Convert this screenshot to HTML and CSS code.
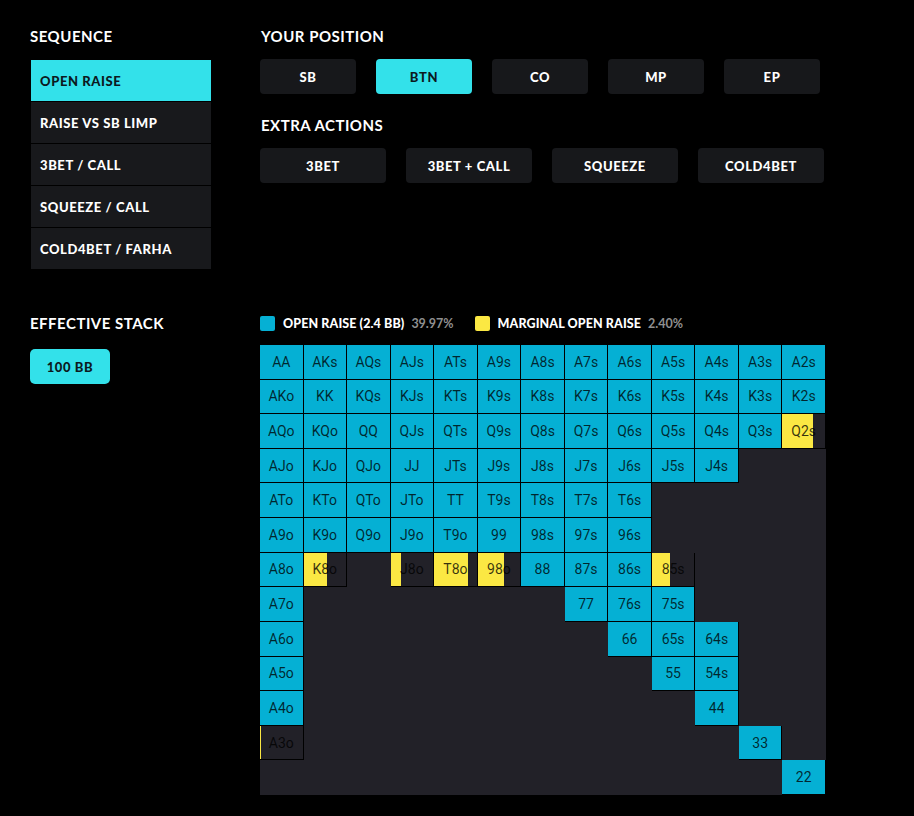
FILE: index.html
```html
<!DOCTYPE html>
<html lang="en">
<head>
<meta charset="utf-8">
<title>Preflop Range</title>
<link rel="stylesheet" href="styles.css">
</head>
<body>
<div class="page">
  <section class="top">
    <div class="col-left">
      <h2 class="heading">SEQUENCE</h2>
      <ul class="seq">
        <li class="seq-item active">OPEN RAISE</li>
        <li class="seq-item">RAISE VS SB LIMP</li>
        <li class="seq-item">3BET / CALL</li>
        <li class="seq-item">SQUEEZE / CALL</li>
        <li class="seq-item">COLD4BET / FARHA</li>
      </ul>
    </div>
    <div class="col-right">
      <h2 class="heading">YOUR POSITION</h2>
      <div class="btn-row pos">
        <button class="btn">SB</button>
        <button class="btn active">BTN</button>
        <button class="btn">CO</button>
        <button class="btn">MP</button>
        <button class="btn">EP</button>
      </div>
      <h2 class="heading second">EXTRA ACTIONS</h2>
      <div class="btn-row extra">
        <button class="btn">3BET</button>
        <button class="btn">3BET + CALL</button>
        <button class="btn">SQUEEZE</button>
        <button class="btn">COLD4BET</button>
      </div>
    </div>
  </section>
  <section class="bottom">
    <div class="col-left">
      <h2 class="heading">EFFECTIVE STACK</h2>
      <button class="btn active stack">100 BB</button>
    </div>
    <div class="col-right">
      <div class="legend">
        <div class="legend-item">
          <span class="swatch raise"></span>
          <span class="legend-label">OPEN RAISE (2.4 BB)</span>
          <span class="legend-pct">39.97%</span>
        </div>
        <div class="legend-item">
          <span class="swatch marginal"></span>
          <span class="legend-label">MARGINAL OPEN RAISE</span>
          <span class="legend-pct">2.40%</span>
        </div>
      </div>
      <div class="range" id="range"></div>
    </div>
  </section>
</div>
<script src="script.js"></script>
</body>
</html>
```
FILE: styles.css
```css
* { box-sizing: border-box; }
html, body { margin: 0; padding: 0; background: #000; }
body { font-family: "Lato", "Liberation Sans", sans-serif; color: #fff; }

.page { padding: 27px 0 0 30px; width: 914px; height: 816px; }

.top, .bottom { display: grid; grid-template-columns: 230px 1fr; }
.bottom { margin-top: 45px; }

.heading {
  margin: 0;
  font-size: 15px;
  line-height: 18px;
  font-weight: 700;
  letter-spacing: 0.5px;
}
.col-left .heading { margin-bottom: 15px; }
.col-right .heading { margin-bottom: 14px; padding-left: 1px; }
.col-right .heading.second { margin-top: 22px; }

.seq { list-style: none; margin: 0 0 0 1px; padding: 0; width: 180px; }
.seq-item {
  height: 42px;
  border-bottom: 1px solid #000;
  background: #18191c;
  display: flex;
  align-items: center;
  padding-left: 9px;
  font-size: 13px;
  font-weight: 900;
  letter-spacing: 0.6px;
}
.seq-item:last-child { border-bottom: 0; height: 41px; }
.seq-item.active { background: #33e1ea; color: #0c1a1e; }

.btn-row { display: flex; gap: 20px; }
.btn {
  height: 35px;
  border: 0;
  border-radius: 4px;
  background: #17181b;
  color: #fff;
  font-family: "Lato", "Liberation Sans", sans-serif;
  font-size: 13px;
  font-weight: 900;
  letter-spacing: 0.6px;
  padding: 0;
  display: flex;
  align-items: center;
  justify-content: center;
}
.pos .btn { width: 96px; }
.extra .btn { width: 126px; }
.btn.active { background: #33e1ea; color: #0c1a1e; }
.btn.stack { width: 80px; margin-top: 17px; border-radius: 5px; }

.legend { display: flex; align-items: center; height: 18px; }
.legend-item { display: flex; align-items: center; margin-right: 21px; }
.swatch { width: 15px; height: 15px; border-radius: 2px; margin-right: 8px; }
.swatch.raise { background: #05b0d4; }
.swatch.marginal { background: #fbe843; }
.legend-label {
  font-weight: 900;
  font-size: 12.5px;
  letter-spacing: 0.1px;
  margin-right: 7px;
}
.legend-pct {
  font-size: 12.5px;
  font-weight: 700;
  color: #8f8f8f;
}

.range {
  margin-top: 13px;
  width: 566px;
  height: 450px;
  background: #222128;
  display: grid;
  grid-template-columns: repeat(13, 1fr);
  grid-template-rows: repeat(13, 1fr);
}
.cell {
  display: flex;
  align-items: center;
  justify-content: center;
  font-family: "Roboto", "Liberation Sans", sans-serif;
  font-size: 14px;
  color: rgba(0, 0, 0, 0.78);
}
.cell.raise { background: #05b0d4; border-right: 1px solid #000; border-bottom: 1px solid #000; }
.cell.mixed { border-right: 1px solid #000; border-bottom: 1px solid #000; }
```
FILE: script.js
```js
(function () {
  var ranks = ["A","K","Q","J","T","9","8","7","6","5","4","3","2"];
  var raise = {
    0: [0,1,2,3,4,5,6,7,8,9,10,11,12],
    1: [0,1,2,3,4,5,6,7,8,9,10,11,12],
    2: [0,1,2,3,4,5,6,7,8,9,10,11],
    3: [0,1,2,3,4,5,6,7,8,9,10],
    4: [0,1,2,3,4,5,6,7,8],
    5: [0,1,2,3,4,5,6,7,8],
    6: [0,6,7,8],
    7: [0,7,8,9],
    8: [0,8,9,10],
    9: [0,9,10],
    10: [0,10],
    11: [11],
    12: [12]
  };
  var mixed = {
    "2,12": 72,
    "6,1": 55,
    "6,3": 25,
    "6,4": 78,
    "6,5": 62,
    "6,9": 42,
    "11,0": 2
  };
  var range = document.getElementById("range");
  for (var r = 0; r < 13; r++) {
    for (var c = 0; c < 13; c++) {
      var el = document.createElement("div");
      el.className = "cell";
      var label;
      if (r === c) label = ranks[r] + ranks[c];
      else if (c > r) label = ranks[r] + ranks[c] + "s";
      else label = ranks[c] + ranks[r] + "o";
      var key = r + "," + c;
      if (raise[r] && raise[r].indexOf(c) !== -1) {
        el.className += " raise";
        el.textContent = label;
      } else if (mixed[key] !== undefined) {
        el.className += " mixed";
        var f = mixed[key];
        el.style.background = "linear-gradient(to right, #fbe843 0, #fbe843 " + f + "%, transparent " + f + "%)";
        el.textContent = label;
      }
      range.appendChild(el);
    }
  }
})();
```
